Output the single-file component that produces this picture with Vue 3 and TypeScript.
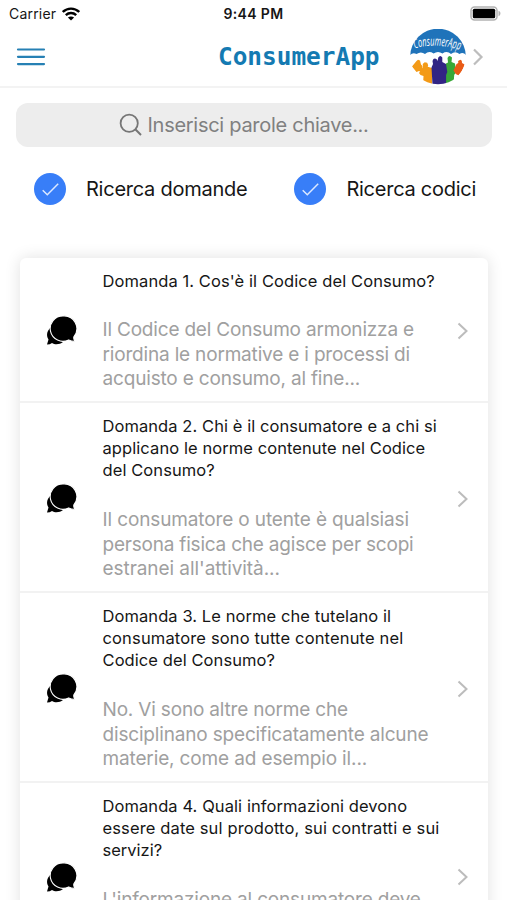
<script setup lang="ts">
interface Line {
  text: string
  spacing: number
}
interface Question {
  id: number
  title: Line[]
  answer: Line[]
}

const questions: Question[] = [
  {
    id: 1,
    title: [{ text: "Domanda 1. Cos'è il Codice del Consumo?", spacing: 0.09 }],
    answer: [
      { text: 'Il Codice del Consumo armonizza e', spacing: -0.19 },
      { text: 'riordina le normative e i processi di', spacing: -0.18 },
      { text: 'acquisto e consumo, al fine...', spacing: -0.17 },
    ],
  },
  {
    id: 2,
    title: [
      { text: 'Domanda 2. Chi è il consumatore e a chi si', spacing: 0.07 },
      { text: 'applicano le norme contenute nel Codice', spacing: 0.08 },
      { text: 'del Consumo?', spacing: 0.09 },
    ],
    answer: [
      { text: 'Il consumatore o utente è qualsiasi', spacing: -0.13 },
      { text: 'persona fisica che agisce per scopi', spacing: -0.21 },
      { text: "estranei all'attività...", spacing: -0.06 },
    ],
  },
  {
    id: 3,
    title: [
      { text: 'Domanda 3. Le norme che tutelano il', spacing: 0.08 },
      { text: 'consumatore sono tutte contenute nel', spacing: 0.15 },
      { text: 'Codice del Consumo?', spacing: 0.08 },
    ],
    answer: [
      { text: 'No. Vi sono altre norme che', spacing: -0.18 },
      { text: 'disciplinano specificatamente alcune', spacing: -0.17 },
      { text: 'materie, come ad esempio il...', spacing: -0.14 },
    ],
  },
  {
    id: 4,
    title: [
      { text: 'Domanda 4. Quali informazioni devono', spacing: 0.08 },
      { text: 'essere date sul prodotto, sui contratti e sui', spacing: 0.13 },
      { text: 'servizi?', spacing: 0 },
    ],
    answer: [{ text: "L'informazione al consumatore deve", spacing: -0.18 }],
  },
]

const filters: string[] = ['Ricerca domande', 'Ricerca codici']
</script>

<template>
  <div class="screen">
    <div class="status">
      <div class="carrier">
        <span>Carrier</span>
        <svg class="wifi" width="18" height="14" viewBox="0 0 18 14">
          <path d="M.8 5C5.500.5 12.500.5 17.200 5M3.800 8.100c3-2.800 7.400-2.800 10.400 0" fill="none" stroke="#000" stroke-width="2.400" />
          <path d="M9 13.600L5.900 10.500c1.800-1.500 4.400-1.500 6.200 0z" />
        </svg>
      </div>
      <span class="time">9:44 PM</span>
      <svg class="battery" width="32" height="15" viewBox="0 0 32 15">
        <rect x="1" y="1" width="26" height="13" rx="3.500" fill="#fff" stroke="#b2b2b2" stroke-width="1.500" />
        <rect x="2.800" y="2.800" width="22.400" height="9.400" rx="1.500" />
        <path d="M28.500 4.800c2.600.9 2.600 4.500 0 5.400z" fill="#b2b2b2" />
      </svg>
    </div>

    <header class="bar">
      <svg class="menu" width="30" height="20" viewBox="0 0 30 20">
        <path d="M2 2.500h26M2 9.800h26M2 17.100h26" fill="none" stroke="#2680b4" stroke-width="2.200" stroke-linecap="round" />
      </svg>
      <h1>ConsumerApp</h1>
      <div class="profile">
        <svg width="56" height="56" viewBox="0 0 56 56">
          <defs>
            <clipPath id="round"><circle cx="28" cy="27.500" r="27.800" /></clipPath>
            <path id="arc" d="M4.500 19.500Q27 13 51 21.500" />
          </defs>
          <g clip-path="url(#round)">
            <path d="M0 0H56V26Q53 22.500 49.500 25Q45 21.500 41 25Q37 21.500 32.500 24.500Q28 21.500 23.500 24.500Q19 21.500 15 25Q11 22 6.500 25Q3 23 0 26z" fill="#1f73ba" />
            <path d="M2 37.500L6.500 32l1.500-1.200 2 .7.500 2 .5 2 1.500 1.500-.5 6.500-3-1.500-2.500 1z" fill="#f39a17" />
            <path d="M9 44l4-6-.3-3 2-1.800 2.500.5 1 2.500-.5 1.500L22 39v17H13l.5-9-3-1z" fill="#f39a17" />
            <path d="M36 34.500l2-1-.5-4.500q1.700-3.800 4.500-.5l-.5 4.500 3.500 1.500 1 8.500-1.800 3-.5 7.500-8 2z" fill="#38a838" />
            <path d="M43.500 41.500l3-6.500 1.800-1-.2-2 2.200-1.200 1.500 1 .2 2.200 2.700 1.500-2.500 6-3.500 5-3-1.500z" fill="#e95b16" />
            <path d="M21.500 38.500l1.500-3.500-.5-3q1-3.500 4-2l1 2 .8-3.500q2-3.200 4 0v4.500l3.700 2 1.300 8-1.200 3v10H22.500z" fill="#322584" />
          </g>
          <text class="logo-text"><textPath href="#arc" textLength="46" lengthAdjust="spacingAndGlyphs">ConsumerApp</textPath></text>
        </svg>
        <svg class="next" width="12" height="18" viewBox="0 0 12 18">
          <path d="M2 1.500L9.500 9 2 16.500" fill="none" stroke="#bdbdbd" stroke-width="2.200" />
        </svg>
      </div>
    </header>

    <main>
      <div class="search">
        <svg width="24" height="24" viewBox="0 0 24 24">
          <circle cx="10.200" cy="10.200" r="8.600" fill="none" stroke="#767676" stroke-width="1.800" />
          <path d="M16.300 16.300l5.700 5.700" stroke="#767676" stroke-width="2" />
        </svg>
        <span>Inserisci parole chiave...</span>
      </div>

      <div class="filters">
        <label v-for="f in filters" :key="f" class="filter">
          <svg width="32" height="32" viewBox="0 0 32 32">
            <circle cx="16" cy="16" r="16" fill="#387ef8" />
            <path d="M8.700 17.200l4.600 4.600L24.200 10.800" fill="none" stroke="#dce9ff" stroke-width="1.500" />
          </svg>
          <span>{{ f }}</span>
        </label>
      </div>

      <section class="card">
        <article v-for="q in questions" :key="q.id" class="item">
          <svg class="chat" width="31" height="31" viewBox="0 0 31 31">
            <path d="M6 11C-1 17 1 22 2.500 24.500L1 29.500q3 0 5-1.500c3 2 8 1.500 11-1L9 22z" />
            <path d="M17.200.900a12.700 12.700 0 1 0 5.500 24c2 1 3.800 1.500 6.300 1.300-1.400-1.600-1.500-3.200-1-4.700A12.700 12.700 0 0 0 17.200.900z" stroke="#fff" stroke-width="1.100" />
          </svg>
          <div class="body">
            <h2><span v-for="l in q.title" :key="l.text" :style="{ letterSpacing: l.spacing + 'px' }">{{ l.text }}</span></h2>
            <p><span v-for="l in q.answer" :key="l.text" :style="{ letterSpacing: l.spacing + 'px' }">{{ l.text }}</span></p>
          </div>
          <svg class="chevron" width="12" height="18" viewBox="0 0 12 18">
            <path d="M1.500 1.500L9.500 9l-8 7.500" fill="none" stroke="#bcbcbc" stroke-width="2" />
          </svg>
        </article>
      </section>
    </main>
  </div>
</template>

<style>
body {
  overflow: hidden;
  background: #fff;
}
</style>

<style scoped>
.screen {
  height: 900px;
  overflow: hidden;
  font-family: Inter, sans-serif;
  color: #161616;
}
.status {
  box-sizing: border-box;
  height: 28px;
  display: grid;
  grid-template-columns: 1fr auto 1fr;
  align-items: center;
  padding: 0 5px 1px 9px;
  font-size: 14px;
}
.carrier {
  display: flex;
  align-items: center;
  gap: 6px;
  letter-spacing: 0.2px;
}
.time {
  font-weight: 600;
  margin-right: 4px;
  letter-spacing: 0.35px;
}
.battery {
  justify-self: end;
}
.bar {
  box-sizing: border-box;
  height: 60px;
  display: flex;
  align-items: center;
  padding: 0 23.500px 0 16px;
  border-bottom: 2px solid #f3f3f3;
}
h1 {
  margin: 0 0 0 172px;
  font: bold 24.400px/28px "DejaVu Sans Mono", monospace;
  color: #147ab2;
  white-space: nowrap;
}
.profile {
  margin-left: auto;
  display: flex;
  align-items: center;
  gap: 5.500px;
}
.logo-text {
  font: italic 13px "Open Sans", sans-serif;
  fill: #fff;
}
.search {
  height: 44px;
  margin: 14.500px 15px 0 15.500px;
  border-radius: 12px;
  background: #ededed;
  display: flex;
  align-items: center;
  gap: 5px;
  padding-left: 103px;
  box-sizing: border-box;
  color: #808080;
  font-size: 20px;
  letter-spacing: -0.280px;
  white-space: nowrap;
}
.filters {
  display: grid;
  grid-template-columns: 260.400px 1fr;
  margin: 26.500px 0 0 34px;
}
.filter {
  display: flex;
  align-items: center;
  gap: 20px;
  font-size: 20px;
  letter-spacing: -0.250px;
  white-space: nowrap;
}
.card {
  margin: 52.600px 19px 0 20px;
  border-radius: 6px 6px 0 0;
  box-shadow: 0 0 16px rgba(0, 0, 0, 0.12);
  background: #fff;
}
.item {
  display: flex;
  align-items: center;
  padding: 12px 19px 9.500px 26px;
  border-bottom: 2px solid #f2f2f2;
}
.chat {
  margin-bottom: 1px;
}
.item:last-child {
  align-items: flex-start;
}
.item:last-child .chat {
  margin-top: 67px;
}
.item:last-child .chevron {
  margin-top: 73px;
}
.body {
  flex: 1;
  margin-left: 25.500px;
}
h2,
p {
  margin: 0;
  white-space: nowrap;
}
h2 span,
p span {
  display: block;
}
h2 {
  font-size: 16.500px;
  font-weight: 400;
  line-height: 22px;
}
p {
  margin-top: 26.900px;
  font-size: 19px;
  line-height: 24.500px;
  color: #a0a0a0;
}
</style>
